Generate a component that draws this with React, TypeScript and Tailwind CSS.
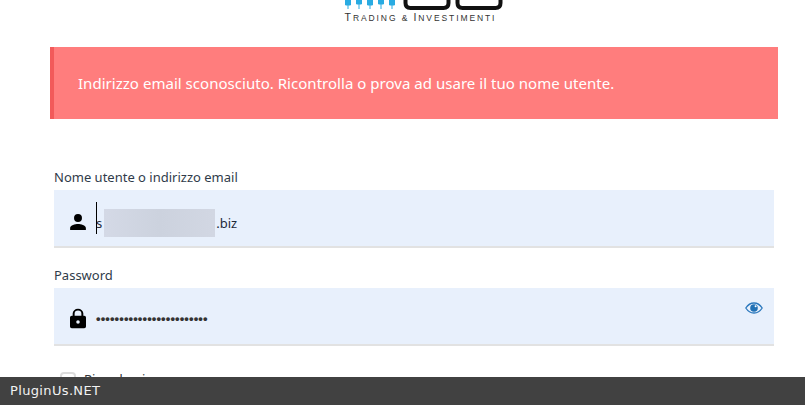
const Logo = () => (
  <div className="flex h-[23px] flex-col items-center pl-[36px]">
    <svg width="170" height="11" viewBox="0 0 170 11">
      <g stroke="#29abe2" strokeWidth="1" fill="#29abe2">
        <path d="M12 0v9M23 0v9M34 0v9M45 0v9M56 0v9" />
        <path d="M9.500 0h5v5h-5zM20.500 0h5v4h-5zM31.500 0h5v5h-5zM42.500 0h5v4h-5zM53.500 0h5v5h-5z" />
      </g>
      <path d="M69.500 0v3q0 5 5 5h33q5 0 5-5v-3M121.500 0v3q0 5 5 5h33q5 0 5-5v-3" fill="none" stroke="#111" strokeWidth="4" />
    </svg>
    <div className="mt-[1px] whitespace-nowrap font-['Liberation_Sans',sans-serif] text-[8.500px] leading-[10px] tracking-[1.9px] text-[#333]">
      <span className="text-[10.500px]">T</span>RADING &amp; <span className="text-[10.500px]">I</span>NVESTIMENTI
    </div>
  </div>
)

const UserIcon = () => (
  <svg width="18" height="18" viewBox="0 0 24 24" fill="#000">
    <path d="M12 12a5.300 5.300 0 1 0 0-10.600 5.300 5.300 0 0 0 0 10.600zm0 2.600c-3.600 0-10.500 1.800-10.500 5.300v2.700h21v-2.700c0-3.500-6.900-5.300-10.500-5.300z" />
  </svg>
)

const LockIcon = () => (
  <svg width="16" height="21" viewBox="0 0 18 22" fill="#000">
    <path d="M3 8V5.500a6 5.500 0 0 1 12 0V8h1a2 2 0 0 1 2 2v10a2 2 0 0 1-2 2H2a2 2 0 0 1-2-2V10a2 2 0 0 1 2-2zm2.200 0h7.600V5.500a3.800 3.500 0 0 0-7.600 0z" fillRule="evenodd" />
    <circle cx="9" cy="15" r="2" fill="#e8f0fc" />
  </svg>
)

const EyeIcon = () => (
  <svg width="18" height="12" viewBox="0 0 18 12">
    <path d="M0.800 6C3 2.600 5.800 1 9 1s6 1.600 8.200 5C15 9.400 12.200 11 9 11S3 9.400 0.800 6z" fill="#e8f0fc" stroke="#2b78bd" strokeWidth="1.300" />
    <circle cx="9" cy="6" r="3.800" fill="#2171b5" />
    <circle cx="10.600" cy="4.200" r="1" fill="#fff" />
  </svg>
)

export default function App() {
  return (
    <div className="relative h-[405px] w-[805px] overflow-hidden bg-white font-['Noto_Sans','Open_Sans',sans-serif]">
      <Logo />
      <div className="ml-[50px] mr-[27px] mt-[24px] flex h-[72px] items-center border-l-4 border-[#f25a5a] bg-[#ff7d7d] pl-[24px] text-[15px] tracking-[0.03px] text-white">
        Indirizzo email sconosciuto. Ricontrolla o prova ad usare il tuo nome utente.
      </div>

      <div className="ml-[54px] mr-[31px] mt-[49px]">
        <div className="h-[22px] text-[13px] leading-[19px] text-[#2f3b4a]">Nome utente o indirizzo email</div>
        <div className="relative flex h-[58px] items-center border-b-2 border-[#e2e2e2] bg-[#e8f0fc] pl-[15px] pt-[10px] text-[13px] text-[#1e2a3a]">
          <span className="mt-[-2px] flex"><UserIcon /></span>
          <span className="ml-[9px] mt-[2px]">s</span>
          <span className="ml-[114px] mt-[2px]">.biz</span>
          <div className="absolute left-[42px] top-[12px] h-[32px] w-px bg-black" />
          <div className="absolute left-[50px] top-[19px] h-[28px] w-[111px] bg-gradient-to-r from-[#d4d9e6] via-[#ccd2de] to-[#d2d7e3] blur-[0.5px]" />
        </div>

        <div className="mt-[18px] h-[22px] text-[13px] leading-[19px] text-[#2f3b4a]">Password</div>
        <div className="relative flex h-[58px] items-center border-b-2 border-[#e2e2e2] bg-[#e8f0fc] pl-[16px] pt-[5px]">
          <LockIcon />
          <span className="ml-[10px] font-['Liberation_Sans',sans-serif] text-[13px] font-bold tracking-[0.1px] text-[#333]">
            ••••••••••••••••••••••••
          </span>
          <div className="absolute right-[11px] top-[14px] flex">
            <EyeIcon />
          </div>
        </div>

        <div className="ml-[6px] mt-[24px] flex items-center gap-[8px]">
          <div className="h-[16px] w-[16px] rounded-[4px] border-2 border-[#dcdcdc]" />
          <span className="text-[13px] text-[#32373c]">Ricordami</span>
        </div>
      </div>

      <div className="absolute inset-x-0 bottom-0 flex h-[28px] items-center bg-[#414141] pl-[10px] font-['DejaVu_Sans',sans-serif] text-[13px] tracking-[0.35px] text-[#f2f2f2]">
        PluginUs.NET
      </div>
    </div>
  )
}
